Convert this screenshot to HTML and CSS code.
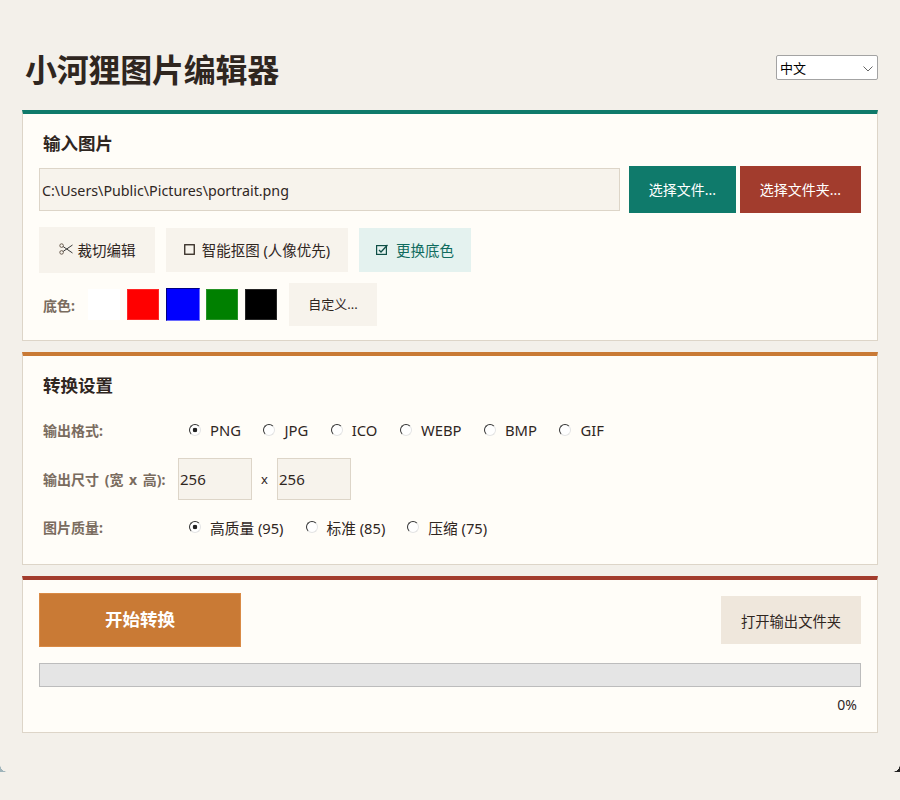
FILE: index.html
```html
<!DOCTYPE html>
<html>
<head>
    <meta charset="utf-8">
    <title>小河狸图片编辑器</title>
    <link rel="stylesheet" href="styles.css">
</head>
<body>
    <div class="corner corner-left"></div>
    <div class="corner corner-right"></div>
    <div class="app">
        <div class="header">
            <h1>小河狸图片编辑器</h1>
            <div class="lang-box">
                <select class="lang">
                    <option>中文</option>
                    <option>English</option>
                </select>
                <svg class="chevron" width="10" height="6" viewBox="0 0 10 6">
                    <path d="M0.5 0.5 L5 5 L9.5 0.5" fill="none" stroke="#666" stroke-width="1"/>
                </svg>
            </div>
        </div>

        <div class="card card-input">
            <h2>输入图片</h2>
            <div class="file-row">
                <input type="text" class="field path" value="C:\Users\Public\Pictures\portrait.png">
                <button type="button" class="btn btn-teal">选择文件...</button>
                <button type="button" class="btn btn-red">选择文件夹...</button>
            </div>
            <div class="tool-row">
                <button type="button" class="tool tool-crop">
                    <svg class="icon icon-crop" width="14" height="12" viewBox="0 0 14 12">
                        <circle cx="2.6" cy="2.6" r="1.8" fill="none" stroke="#6b5d50" stroke-width="1"/>
                        <circle cx="2.6" cy="9.4" r="1.8" fill="none" stroke="#6b5d50" stroke-width="1"/>
                        <path d="M4.2 3.6 L13.5 10 M4.2 8.4 L13.5 2" fill="none" stroke="#3a3a3a" stroke-width="1"/>
                    </svg>裁切编辑
                </button>
                <button type="button" class="tool tool-smart">
                    <svg class="icon" width="11" height="11" viewBox="0 0 11 11">
                        <rect x="0.75" y="0.75" width="9.5" height="9.5" fill="none" stroke="#2f261f" stroke-width="1.3"/>
                    </svg>智能抠图 (人像优先)
                </button>
                <button type="button" class="tool tool-on">
                    <svg class="icon" width="13" height="11" viewBox="0 0 13 11">
                        <rect x="0.6" y="1.6" width="9.8" height="8.8" fill="none" stroke="#0f4f46" stroke-width="1.2"/>
                        <path d="M3 6 L5 8 L11.5 1" fill="none" stroke="#0f4f46" stroke-width="1.3"/>
                    </svg>更换底色
                </button>
            </div>
            <div class="color-row">
                <span class="label color-label">底色:</span>
                <span class="swatch swatch-white"></span>
                <span class="swatch swatch-red"></span>
                <span class="swatch swatch-blue"></span>
                <span class="swatch swatch-green"></span>
                <span class="swatch swatch-black"></span>
                <button type="button" class="tool tool-small">自定义...</button>
            </div>
        </div>

        <div class="card card-settings">
            <h2>转换设置</h2>
            <div class="set-row">
                <span class="label">输出格式:</span>
                <div class="radios radios-format">
                    <label><input type="radio" name="format" checked>PNG</label>
                    <label><input type="radio" name="format">JPG</label>
                    <label><input type="radio" name="format">ICO</label>
                    <label><input type="radio" name="format">WEBP</label>
                    <label><input type="radio" name="format">BMP</label>
                    <label><input type="radio" name="format">GIF</label>
                </div>
            </div>
            <div class="size-row">
                <span class="label">输出尺寸 (宽 x 高):</span>
                <input type="text" class="field size" value="256">
                <span class="times">x</span>
                <input type="text" class="field size" value="256">
            </div>
            <div class="set-row">
                <span class="label">图片质量:</span>
                <div class="radios">
                    <label><input type="radio" name="quality" checked>高质量 (95)</label>
                    <label><input type="radio" name="quality">标准 (85)</label>
                    <label><input type="radio" name="quality">压缩 (75)</label>
                </div>
            </div>
        </div>

        <div class="card card-run">
            <div class="run-row">
                <button type="button" class="btn-start">开始转换</button>
                <button type="button" class="btn-open">打开输出文件夹</button>
            </div>
            <div class="progress"></div>
            <div class="percent">0%</div>
        </div>
    </div>
</body>
</html>
```

FILE: styles.css
```css
html,
body {
    margin: 0;
    height: 800px;
    overflow: hidden;
}

body {
    background-color: #f3f0ea;
    color: #2f261f;
    font-family: "Noto Sans", "Noto Sans CJK SC", sans-serif;
    font-size: 14px;
}

button,
input,
select {
    font-family: inherit;
    box-sizing: border-box;
}

.app {
    padding: 0 22px;
}

.header {
    display: flex;
    justify-content: space-between;
    align-items: center;
    height: 110px;
    padding: 30px 0 0 3px;
    box-sizing: border-box;
}

h1 {
    margin: 0;
    font-size: 32px;
    font-weight: 700;
    line-height: 40px;
    letter-spacing: -0.25px;
}

.lang-box {
    position: relative;
    width: 102px;
    height: 25px;
    margin-top: -5px;
}

.lang {
    appearance: none;
    width: 100%;
    height: 100%;
    padding: 0 0 0 3px;
    font-size: 13px;
    background-color: #fff;
    border: 1px solid #a3a3a3;
    border-radius: 2px;
    color: #000;
}

.chevron {
    position: absolute;
    top: 11px;
    right: 5px;
}

.card {
    background-color: #fffdf8;
    border: 1px solid #ddd5c8;
    border-top-width: 4px;
    padding: 0 16px;
    margin-bottom: 11px;
    box-sizing: border-box;
}

.card-input {
    height: 231px;
    border-top-color: #0f7a6b;
}

.card-settings {
    height: 213px;
    border-top-color: #c97a35;
}

.card-run {
    height: 157px;
    border-top-color: #a23c2d;
    padding-top: 13px;
}

h2 {
    margin: 0;
    padding: 17px 0 0 4px;
    font-size: 17.5px;
    font-weight: 700;
    line-height: 24px;
}

.field {
    background-color: #f7f3ec;
    border: 1px solid #ddd5c8;
    color: #2f261f;
    padding: 0 2px;
}

.file-row {
    display: flex;
    align-items: center;
    margin-top: 11px;
}

.path {
    width: 581px;
    height: 43px;
    margin-right: 9px;
    padding-top: 2px;
    font-size: 14.25px;
}

.btn {
    height: 47px;
    border: 1px solid transparent;
    color: #fff;
    font-size: 14px;
    padding: 0 0 2px;
}

.btn-teal {
    width: 107px;
    margin-right: 4px;
    background-color: #0f7a6b;
}

.btn-red {
    width: 121px;
    background-color: #a23c2d;
}

.tool-row {
    display: flex;
    align-items: center;
    gap: 11px;
    margin-top: 14px;
}

.tool {
    display: flex;
    align-items: center;
    justify-content: center;
    height: 44px;
    padding: 0 0 2px;
    border: none;
    background-color: #f7f3ec;
    color: #2f261f;
    font-size: 14.5px;
}

.tool-crop {
    width: 116px;
    height: 46px;
}

.tool-smart {
    width: 182px;
}

.tool-on {
    width: 112px;
    background-color: #e4f2ef;
    color: #0f6b5e;
}

.icon {
    margin-right: 7px;
}

.icon-crop {
    margin-right: 5px;
}

.label {
    color: #7a6c5f;
    font-size: 14px;
    font-weight: 700;
}

.color-row {
    display: flex;
    align-items: center;
    margin-top: 10px;
}

.color-label {
    margin-left: 4px;
    margin-right: 13px;
}

.swatch {
    width: 32px;
    height: 31px;
    margin-right: 7px;
    box-sizing: border-box;
    box-shadow: inset 0 0 0 1px rgba(255, 255, 255, 0.15);
}

.swatch-white {
    background-color: #fff;
}

.swatch-red {
    background-color: #f00;
}

.swatch-blue {
    width: 34px;
    height: 33px;
    margin-right: 6px;
    background-color: #00f;
    border: 1px solid;
    border-color: #000080 #6a6aff #6a6aff #000080;
    box-shadow: none;
}

.swatch-green {
    background-color: #008000;
}

.swatch-black {
    background-color: #000;
}

.tool-small {
    width: 88px;
    height: 43px;
    margin-left: 5px;
    font-size: 13px;
}

.set-row {
    display: flex;
    align-items: center;
    padding-left: 4px;
    height: 20px;
}

.card-settings h2 + .set-row {
    margin-top: 23px;
}

.set-row .label {
    width: 146px;
}

.radios {
    display: flex;
    align-items: center;
    gap: 22px;
    font-size: 14.7px;
}

.radios-format {
    gap: 22.5px;
    font-size: 14.8px;
}

.radios label {
    display: flex;
    align-items: center;
    gap: 9px;
}

.radios input {
    appearance: none;
    width: 12px;
    height: 12px;
    margin: 0;
    border-radius: 50%;
    border: 1px solid;
    border-color: #333 #e4e4e4 #e4e4e4 #333;
    background-color: #fff;
}

.radios input:checked {
    background-image: radial-gradient(circle, #222 0 2px, transparent 2.6px);
}

.size-row {
    display: flex;
    align-items: center;
    padding-left: 4px;
    margin-top: 18px;
    margin-bottom: 17px;
}

.size-row .label {
    width: 135px;
    word-spacing: 2px;
}

.size {
    width: 74px;
    height: 42px;
    padding: 0 1px;
    font-size: 15px;
}

.times {
    width: 25px;
    text-align: center;
    font-size: 13px;
}

.run-row {
    display: flex;
    justify-content: space-between;
    align-items: center;
}

.btn-start {
    width: 202px;
    height: 54px;
    padding: 0 0 3px;
    border: 1px solid #d98a45;
    background-color: #c97a35;
    color: #fff;
    font-size: 17.5px;
    font-weight: 700;
}

.btn-open {
    width: 140px;
    height: 48px;
    border: none;
    background-color: #efe7dc;
    color: #2f261f;
    font-size: 14.3px;
}

.progress {
    height: 24px;
    margin-top: 16px;
    background-color: #e5e5e5;
    border: 1px solid #bcbcbc;
    box-sizing: border-box;
}

.percent {
    margin-top: 8px;
    padding-right: 4px;
    text-align: right;
    font-size: 14px;
    line-height: 20px;
}

/* window corners showing at the bottom edge */
.corner {
    position: absolute;
    top: 765px;
    width: 7px;
    height: 7px;
}

.corner-left {
    left: 0;
    background: radial-gradient(circle at 100% 0, transparent 6.5px, #9fb4ba 7px);
}

.corner-right {
    right: 0;
    background: radial-gradient(circle at 0 0, transparent 6.5px, #222 7px);
}
```
